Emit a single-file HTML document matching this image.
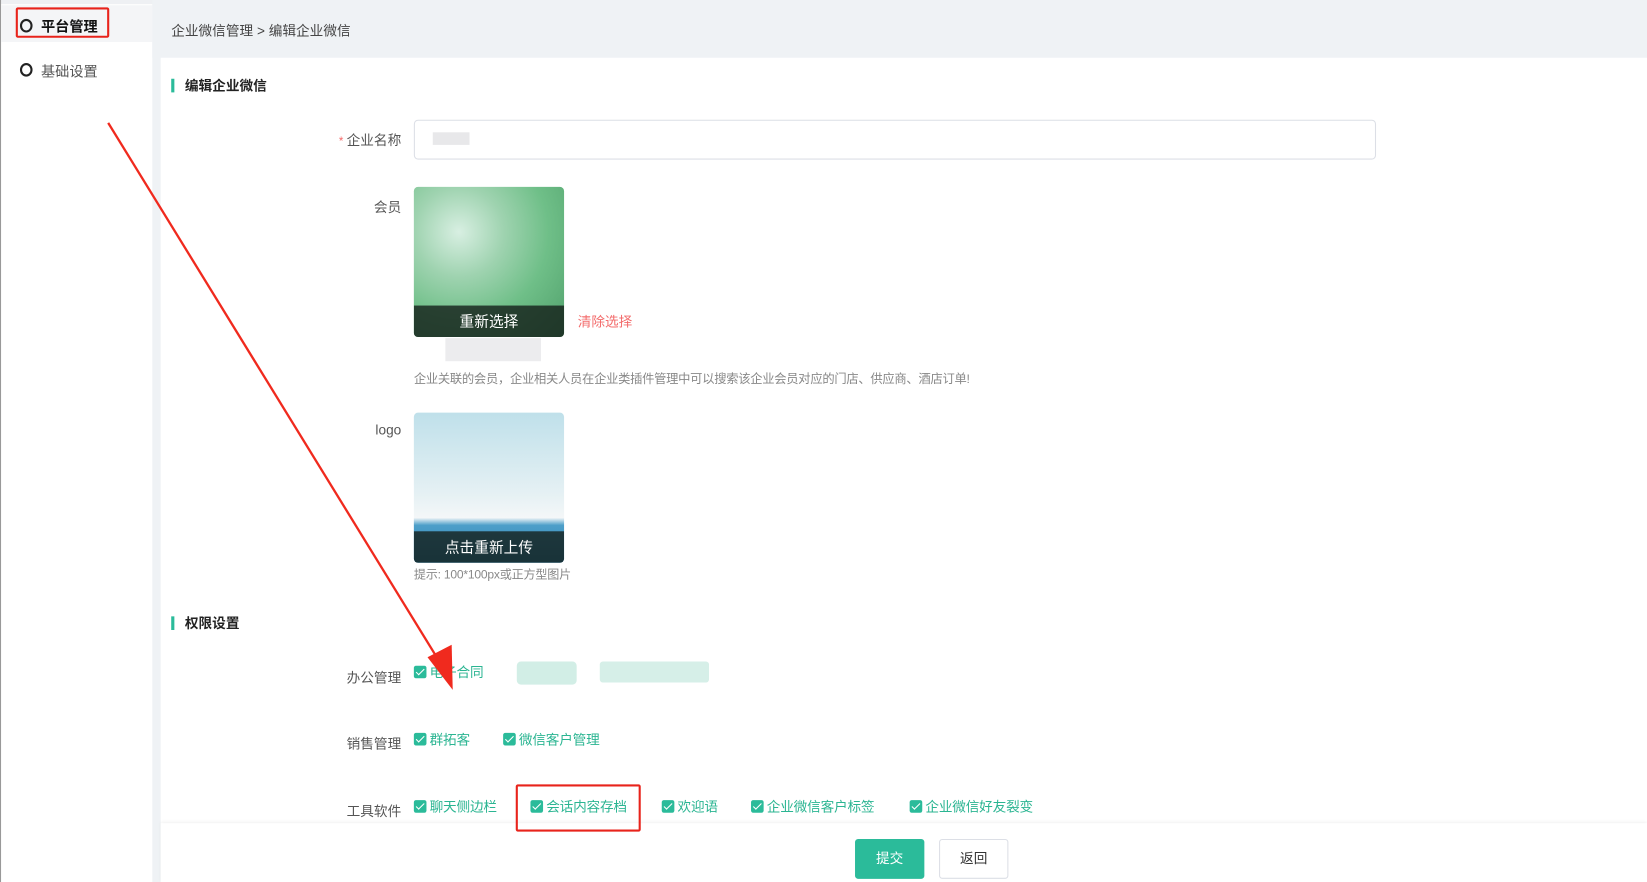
<!DOCTYPE html>
<html><head><meta charset="utf-8"><style>
html,body{margin:0;padding:0;width:1647px;height:882px;overflow:hidden;background:#fff}
#s{position:absolute;left:0;top:0;width:1568px;height:840px;transform:scale(1.0504,1.05);transform-origin:0 0;font-family:"Liberation Sans","Noto Sans CJK SC",sans-serif;font-size:13px;color:#333}
.a{position:absolute}
.lbl{position:absolute;width:200px;text-align:right;left:182px;color:#555;font-size:13px}
.cb{position:absolute;color:#2bb592;font-size:13px;white-space:nowrap;letter-spacing:-0.2px}
.cb i{display:inline-block;width:12px;height:12px;background:#2bbb9a;border-radius:2px;vertical-align:-1px;margin-right:3px;position:relative}
.cb i:after{content:"";position:absolute;left:4px;top:1px;width:3px;height:7px;border:solid #fff;border-width:0 1.5px 1.5px 0;transform:rotate(45deg)}
.ov{position:absolute;left:0;bottom:0;width:100%;height:30px;background:rgba(20,30,25,.8);color:#fff;text-align:center;line-height:30px;font-size:14px}
</style></head><body><div id="s">
<div class="a" style="left:0;top:0;width:1568px;height:4px;background:#eef0f3"></div>
<div class="a" style="left:0;top:0;width:1px;height:840px;background:#999"></div>
<div class="a" style="left:1px;top:5px;width:144px;height:35px;background:#f4f5f7"></div>
<div class="a" style="left:145px;top:0;width:1423px;height:55px;background:#eff2f5"></div>
<div class="a" style="left:145px;top:0;width:8px;height:840px;background:#eff2f5"></div>
<div class="a" style="left:15px;top:7px;width:85px;height:25px;border:2px solid #e8231b;border-radius:2px"></div>
<div class="a" style="left:19px;top:18px;width:8px;height:9px;border:2px solid #222;border-radius:50%"></div>
<div class="a" style="left:39px;top:14px;font-weight:bold;font-size:13.5px;color:#111">平台管理</div>
<div class="a" style="left:19px;top:60px;width:8px;height:9px;border:2px solid #222;border-radius:50%"></div>
<div class="a" style="left:39px;top:57px;font-size:13.5px;color:#555">基础设置</div>
<div class="a" style="left:163px;top:19px;color:#444">企业微信管理 &gt; 编辑企业微信</div>
<div class="a" style="left:163px;top:75px;width:3px;height:13px;background:#2bbb9a"></div>
<div class="a" style="left:176px;top:71px;font-weight:bold;color:#222">编辑企业微信</div>
<div class="lbl" style="top:123px"><span style="color:#f56c6c;font-size:11px">* </span>企业名称</div>
<div class="a" style="left:394px;top:114px;width:914px;height:36px;border:1px solid #dcdfe6;border-radius:4px"></div>
<div class="a" style="left:412px;top:126px;width:35px;height:12px;background:#e8e8ea"></div>
<div class="lbl" style="top:187px">会员</div>
<div class="a" style="left:394px;top:178px;width:143px;height:143px;border-radius:4px;overflow:hidden;background:radial-gradient(circle at 30% 30%,#d8efe2 0,#9fd3b0 30%,#6fbf88 60%,#4f9f6a 100%)"><div class="ov">重新选择</div></div>
<div class="a" style="left:550px;top:296px;color:#f36c6c">清除选择</div>
<div class="a" style="left:424px;top:322px;width:91px;height:22px;background:#ececee"></div>
<div class="a" style="left:394px;top:352px;font-size:11.7px;color:#888;letter-spacing:-0.25px">企业关联的会员，企业相关人员在企业类插件管理中可以搜索该企业会员对应的门店、供应商、酒店订单!</div>
<div class="lbl" style="top:402px">logo</div>
<div class="a" style="left:394px;top:393px;width:143px;height:143px;border-radius:4px;overflow:hidden;background:linear-gradient(#bfe0ea 0,#e6f1f4 55%,#f4f7f8 70%,#4d9fc9 75%,#2b84b8 100%)"><div class="ov">点击重新上传</div></div>
<div class="a" style="left:394px;top:539px;font-size:11.5px;color:#888;letter-spacing:-0.2px">提示: 100*100px或正方型图片</div>
<div class="a" style="left:163px;top:587px;width:3px;height:13px;background:#2bbb9a"></div>
<div class="a" style="left:176px;top:583px;font-weight:bold;color:#222">权限设置</div>
<div class="lbl" style="top:635px">办公管理</div>
<div class="cb" style="left:394px;top:630px"><i></i>电子合同</div>
<div class="a" style="left:492px;top:630px;width:57px;height:22px;background:#d2eee6;border-radius:4px"></div>
<div class="a" style="left:571px;top:630px;width:104px;height:20px;background:#d6efe8;border-radius:3px"></div>
<div class="lbl" style="top:698px">销售管理</div>
<div class="cb" style="left:394px;top:694px"><i></i>群拓客</div>
<div class="cb" style="left:479px;top:694px"><i></i>微信客户管理</div>
<div class="lbl" style="top:762px">工具软件</div>
<div class="cb" style="left:394px;top:758px"><i></i>聊天侧边栏</div>
<div class="cb" style="left:505px;top:758px"><i></i>会话内容存档</div>
<div class="cb" style="left:630px;top:758px"><i></i>欢迎语</div>
<div class="cb" style="left:715px;top:758px"><i></i>企业微信客户标签</div>
<div class="cb" style="left:866px;top:758px"><i></i>企业微信好友裂变</div>
<div class="a" style="left:153px;top:784px;width:1415px;height:56px;background:#fff;box-shadow:0 -1px 3px rgba(0,0,0,.06)"></div>
<div class="a" style="left:814px;top:799px;width:66px;height:38px;background:#2bbb9a;border-radius:3px;color:#fff;text-align:center;line-height:38px">提交</div>
<div class="a" style="left:894px;top:799px;width:64px;height:36px;border:1px solid #dcdfe6;border-radius:3px;color:#333;text-align:center;line-height:36px">返回</div>
<div class="a" style="left:491px;top:747px;width:115px;height:41px;border:2px solid #e8231b;border-radius:2px"></div>
<svg class="a" style="left:0;top:0" width="1568" height="840"><line x1="103" y1="117" x2="422" y2="636" stroke="#f02a1e" stroke-width="2.2"/><polygon points="431,657 407,626 430,614" fill="#f02a1e"/></svg>
</div></body></html>
